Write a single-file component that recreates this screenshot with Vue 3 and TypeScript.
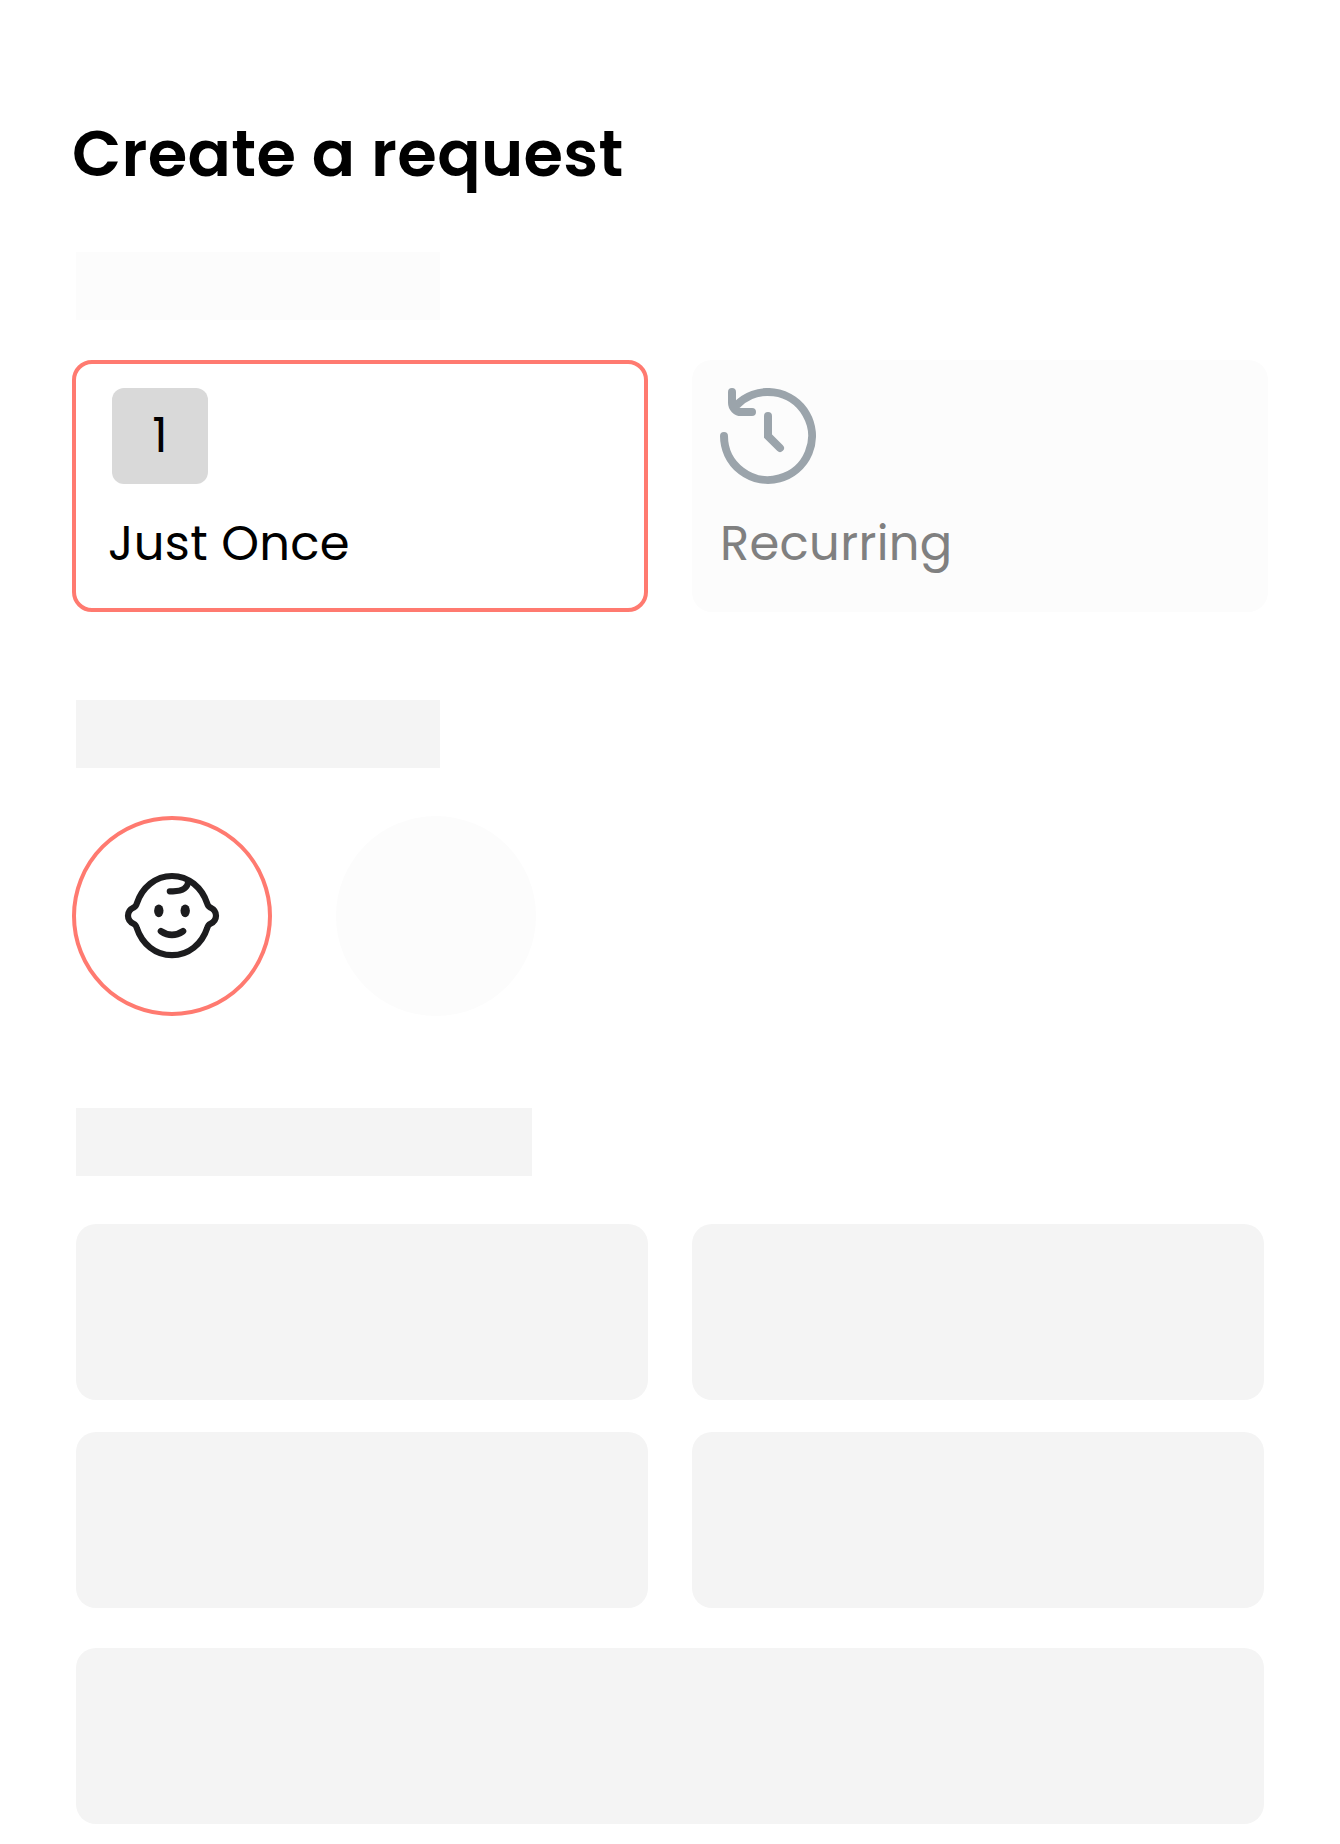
<script setup lang="ts">
const tiles: number[] = [1, 2, 3, 4]
</script>

<template>
  <main class="page">
    <h1 class="title">Create a request</h1>

    <div class="bar faint"></div>
    <section class="options">
      <button class="card selected" type="button">
        <span class="badge">1</span>
        <span class="label">Just Once</span>
      </button>
      <button class="card muted" type="button">
        <svg class="history" viewBox="0 0 24 24" fill="none" stroke="#9ba4ab" stroke-width="2" stroke-linecap="round">
          <path d="M1 12A11 11 0 1 0 4.22 4.22" />
          <path d="M3 1v2.7A2.3 2.3 0 0 0 5.3 6H8" />
          <path d="M12 7v5l3 3" />
        </svg>
        <span class="label">Recurring</span>
      </button>
    </section>

    <div class="bar second"></div>
    <section class="people">
      <div class="avatar active">
        <svg viewBox="0 0 96 96" fill="none" stroke="#1c1c1e" stroke-width="6.2" stroke-linecap="round" stroke-linejoin="round">
          <path d="M48 8C31.5 8 18 19.5 12.8 35.5Q12 38.5 9.6 39.6C6 41.4 4 44.2 4 47.7C4 51.2 6 54 9.6 55.8Q12 57 12.8 60C18 76 31.5 87.2 48 87.2S78 76 83.2 60Q84 57 86.4 55.8C90 54 92 51.2 92 47.7C92 44.2 90 41.4 86.4 39.6Q84 38.5 83.2 35.5C78 19.5 64.5 8 48 8Z" />
          <path d="M45.8 23.3H49C58.5 23.3 63.6 20.5 64.4 13" />
          <path d="M37 63.2Q48 70.6 59 63.2" stroke-width="6.6" />
          <ellipse cx="34.8" cy="42.8" rx="4.7" ry="6.4" fill="#1c1c1e" stroke="none" />
          <ellipse cx="61.2" cy="42.8" rx="4.7" ry="6.4" fill="#1c1c1e" stroke="none" />
        </svg>
      </div>
      <div class="avatar empty"></div>
    </section>

    <div class="bar wide"></div>
    <section class="tiles">
      <div v-for="tile in tiles" :key="tile" class="tile"></div>
    </section>
    <div class="tile full"></div>
  </main>
</template>

<style>
body {
  background: #fff;
}
</style>

<style scoped>
.page {
  box-sizing: border-box;
  width: 1340px;
  height: 1844px;
  padding: 106px 72px 20px;
  background: #fff;
  color: #000;
  font-family: Poppins, Inter, sans-serif;
  font-feature-settings: "cv11" 1;
}
.title {
  margin: 0;
  height: 96px;
  font-size: 64px;
  line-height: 96px;
  font-weight: 600;
  white-space: nowrap;
  letter-spacing: 0.34px;
}
.bar {
  width: 364px;
  height: 68px;
  margin-left: 4px;
  background: #f4f4f4;
}
.bar.faint {
  margin-top: 50px;
  background: #fcfcfc;
}
.bar.second {
  margin-top: 88px;
}
.bar.wide {
  width: 456px;
  margin-top: 92px;
}
.options {
  display: flex;
  gap: 44px;
  margin-top: 40px;
}
.card {
  box-sizing: border-box;
  display: flex;
  flex-direction: column;
  align-items: flex-start;
  width: 576px;
  height: 252px;
  padding: 28px;
  border: 0;
  border-radius: 20px;
  background: #fcfcfc;
  color: #808080;
  font: inherit;
  font-feature-settings: inherit;
  text-align: left;
}
.card.selected {
  padding: 24px 32px;
  border: 4px solid #ff7a70;
  background: #fff;
  color: #000;
}
.badge {
  display: flex;
  align-items: center;
  justify-content: center;
  width: 96px;
  height: 96px;
  margin-left: 4px;
  border-radius: 12px;
  background: #d9d9d9;
  font-size: 48px;
  line-height: 72px;
}
.history {
  display: block;
  width: 96px;
  height: 96px;
}
.label {
  margin-top: 24px;
  font-size: 48px;
  line-height: 72px;
  letter-spacing: 0.34px;
  white-space: nowrap;
}
.people {
  display: flex;
  gap: 64px;
  margin-top: 48px;
}
.avatar {
  box-sizing: border-box;
  display: flex;
  align-items: center;
  justify-content: center;
  width: 200px;
  height: 200px;
  border-radius: 50%;
}
.avatar.active {
  border: 4px solid #ff7a70;
}
.avatar.empty {
  background: #fcfcfc;
}
.avatar svg {
  width: 96px;
  height: 96px;
}
.tiles {
  display: grid;
  grid-template-columns: 572px 572px;
  gap: 32px 44px;
  margin: 48px 0 0 4px;
}
.tile {
  height: 176px;
  border-radius: 20px;
  background: #f4f4f4;
}
.tile.full {
  width: 1188px;
  margin: 40px 0 0 4px;
}
</style>
